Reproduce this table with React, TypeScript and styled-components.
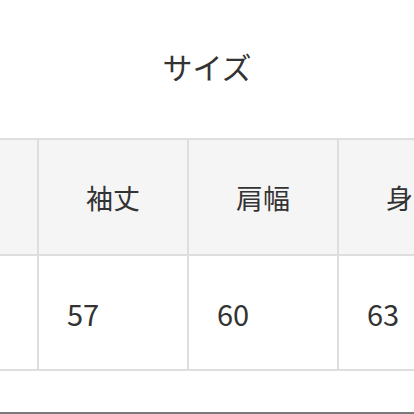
import React from "react";
import styled, { createGlobalStyle } from "styled-components";

const GlobalStyle = createGlobalStyle`
  html, body {
    margin: 0;
    padding: 0;
    background: #ffffff;
    overflow: hidden;
  }
  body {
    font-family: "Noto Sans CJK JP", "Noto Sans", sans-serif;
    color: #333333;
  }
`;

const Page = styled.div`
  width: 414px;
  height: 414px;
  display: flex;
  flex-direction: column;
  overflow: hidden;
`;

const Title = styled.h2`
  margin: 46px 0 52px;
  height: 40px;
  line-height: 40px;
  font-size: 30px;
  font-weight: 400;
  text-align: center;
  color: #333333;
`;

const TableWrap = styled.div`
  width: 414px;
  overflow: hidden;
`;

const Table = styled.div`
  margin-left: -113px;
  display: grid;
  grid-template-columns: repeat(5, 150px);
  width: 750px;
  border-top: 2px solid #dedede;
`;

const Cell = styled.div<{ $head?: boolean }>`
  box-sizing: border-box;
  height: ${(p) => (p.$head ? "116px" : "115px")};
  border-left: 2px solid #dedede;
  border-bottom: 2px solid #dedede;
  background: ${(p) => (p.$head ? "#f5f5f5" : "#ffffff")};
  display: flex;
  align-items: center;
  justify-content: ${(p) => (p.$head ? "center" : "flex-start")};
  padding-left: ${(p) => (p.$head ? "0" : "28px")};
  font-size: ${(p) => (p.$head ? "27px" : "29px")};
  color: #333333;
`;

const Spacer = styled.div`
  flex: 1;
`;

const Divider = styled.div`
  height: 2px;
  background: #7a7a7a;
`;

const headers = ["着丈", "袖丈", "肩幅", "身幅", "裾幅"];
const values = ["70", "57", "60", "63", "55"];

export default function App() {
  return (
    <Page>
      <GlobalStyle />
      <Title>サイズ</Title>
      <TableWrap>
        <Table>
          {headers.map((h) => (
            <Cell key={h} $head>
              {h}
            </Cell>
          ))}
          {values.map((v, i) => (
            <Cell key={i}>{v}</Cell>
          ))}
        </Table>
      </TableWrap>
      <Spacer />
      <Divider />
    </Page>
  );
}
